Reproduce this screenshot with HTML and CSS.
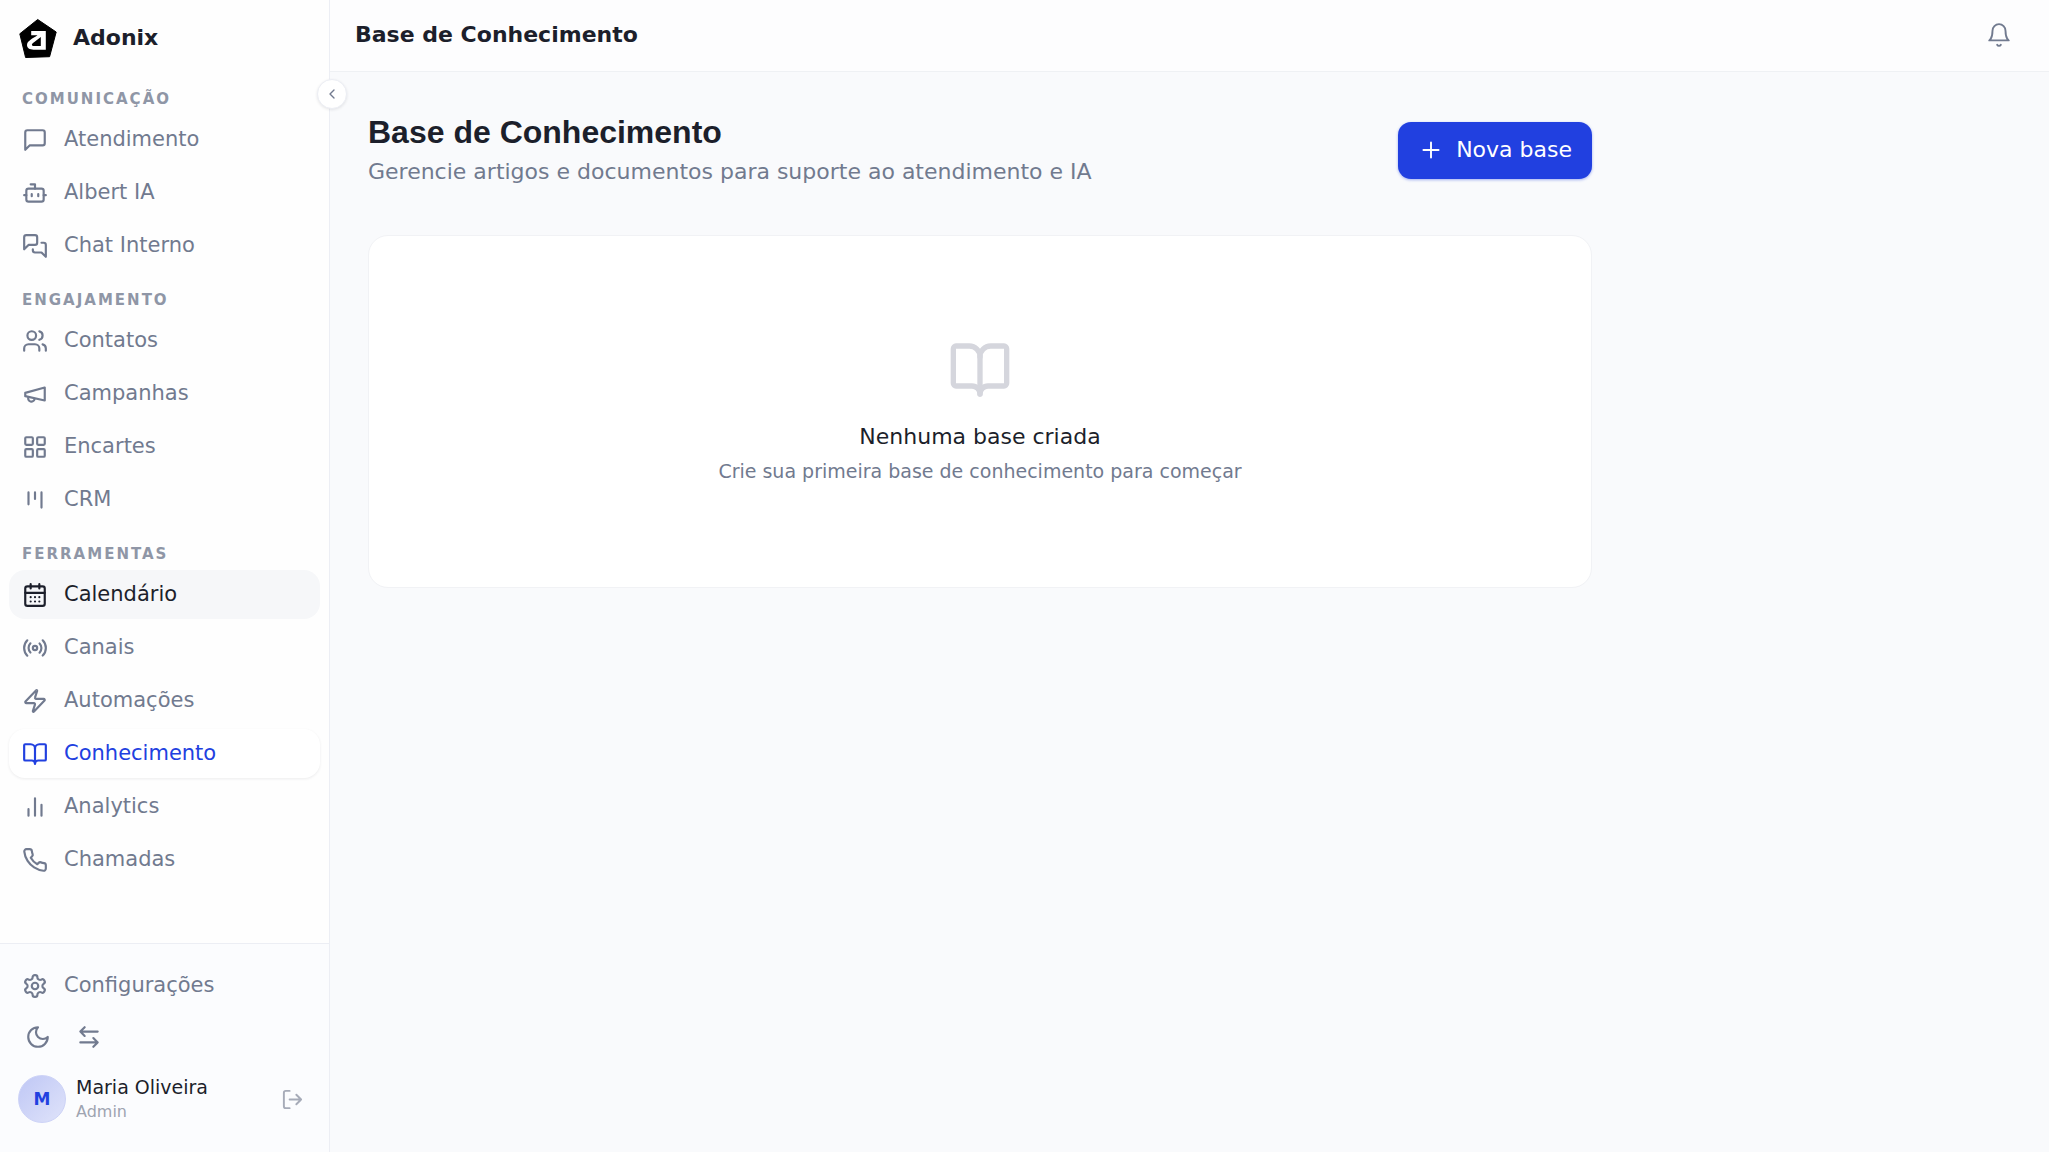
FILE: index.html
```html
<!DOCTYPE html>
<html lang="pt-BR">
<head>
    <meta charset="UTF-8">
    <title>Adonix</title>
    <link rel="stylesheet" href="styles.css">
</head>
<body>
    <aside class="sidebar">
        <div class="brand">
            <svg class="brand-logo" viewBox="0 0 38 40">
                <path fill="#000" stroke="#000" stroke-width="1" stroke-linejoin="round" d="M18.700 1.500 37.200 14 30.600 38.700 6.600 39.500.8 15.800z"/>
                <path fill="#fff" d="M12.200 13h14.600v18.700H14.500C10.500 31.700 8 29.800 8 27c0-4.200 6-6.500 10.500-9.700h-6.300z"/>
                <path fill="#000" d="M21.800 19v8.900h-6.500c-3.200 0-3-2-.6-3.500z"/>
            </svg>
            <span>Adonix</span>
        </div>
        <nav class="nav">
            <section class="nav-group">
                <h2>COMUNICAÇÃO</h2>
                <a href="#" class="nav-item">
                    <svg class="icon" viewBox="0 0 24 24"><path d="M21 15a2 2 0 0 1-2 2H7l-4 4V5a2 2 0 0 1 2-2h14a2 2 0 0 1 2 2z"/></svg>
                    <span>Atendimento</span>
                </a>
                <a href="#" class="nav-item">
                    <svg class="icon" viewBox="0 0 24 24"><path d="M12 8V4H8M2 14h2M20 14h2M15 13v2M9 13v2"/><rect x="4" y="8" width="16" height="12" rx="2"/></svg>
                    <span>Albert IA</span>
                </a>
                <a href="#" class="nav-item">
                    <svg class="icon" viewBox="0 0 24 24"><path d="M14 9a2 2 0 0 1-2 2H6l-4 4V4a2 2 0 0 1 2-2h8a2 2 0 0 1 2 2z"/><path d="M18 9h2a2 2 0 0 1 2 2v11l-4-4h-6a2 2 0 0 1-2-2v-1"/></svg>
                    <span>Chat Interno</span>
                </a>
            </section>
            <section class="nav-group">
                <h2>ENGAJAMENTO</h2>
                <a href="#" class="nav-item">
                    <svg class="icon" viewBox="0 0 24 24"><path d="M16 21v-2a4 4 0 0 0-4-4H6a4 4 0 0 0-4 4v2"/><circle cx="9" cy="7" r="4"/><path d="M22 21v-2a4 4 0 0 0-3-3.870M16 3.130a4 4 0 0 1 0 7.750"/></svg>
                    <span>Contatos</span>
                </a>
                <a href="#" class="nav-item">
                    <svg class="icon" viewBox="0 0 24 24"><path d="m3 11 18-5v12L3 14v-3z"/><path d="M11.600 16.800a3 3 0 1 1-5.800-1.600"/></svg>
                    <span>Campanhas</span>
                </a>
                <a href="#" class="nav-item">
                    <svg class="icon" viewBox="0 0 24 24"><rect x="3" y="3" width="7" height="7" rx="1"/><rect x="14" y="3" width="7" height="7" rx="1"/><rect x="14" y="14" width="7" height="7" rx="1"/><rect x="3" y="14" width="7" height="7" rx="1"/></svg>
                    <span>Encartes</span>
                </a>
                <a href="#" class="nav-item">
                    <svg class="icon" viewBox="0 0 24 24"><path d="M6 5v11M12 5v6M18 5v14"/></svg>
                    <span>CRM</span>
                </a>
            </section>
            <section class="nav-group">
                <h2>FERRAMENTAS</h2>
                <a href="#" class="nav-item hover">
                    <svg class="icon" viewBox="0 0 24 24"><rect x="3" y="4" width="18" height="18" rx="2"/><path d="M16 2v4M8 2v4M3 10h18M8 14h.01M12 14h.01M16 14h.01M8 18h.01M12 18h.01M16 18h.01"/></svg>
                    <span>Calendário</span>
                </a>
                <a href="#" class="nav-item">
                    <svg class="icon" viewBox="0 0 24 24"><path d="M4.900 19.100C1 15.200 1 8.800 4.900 4.900M7.800 16.200c-2.300-2.300-2.300-6.100 0-8.500M16.200 7.800c2.300 2.300 2.300 6.100 0 8.500M19.100 4.900C23 8.800 23 15.100 19.100 19"/><circle cx="12" cy="12" r="2"/></svg>
                    <span>Canais</span>
                </a>
                <a href="#" class="nav-item">
                    <svg class="icon" viewBox="0 0 24 24"><path d="M4 14a1 1 0 0 1-.78-1.630l9.900-10.200a.5.5 0 0 1 .86.460l-1.920 6.020A1 1 0 0 0 13 10h7a1 1 0 0 1 .78 1.630l-9.900 10.200a.5.5 0 0 1-.86-.46l1.920-6.020A1 1 0 0 0 11 14z"/></svg>
                    <span>Automações</span>
                </a>
                <a href="#" class="nav-item active" aria-current="page">
                    <svg class="icon" viewBox="0 0 24 24"><path d="M12 7v14"/><path d="M3 18a1 1 0 0 1-1-1V4a1 1 0 0 1 1-1h5a4 4 0 0 1 4 4 4 4 0 0 1 4-4h5a1 1 0 0 1 1 1v13a1 1 0 0 1-1 1h-6a3 3 0 0 0-3 3 3 3 0 0 0-3-3z"/></svg>
                    <span>Conhecimento</span>
                </a>
                <a href="#" class="nav-item">
                    <svg class="icon" viewBox="0 0 24 24"><path d="M18 20V10M12 20V4M6 20v-6"/></svg>
                    <span>Analytics</span>
                </a>
                <a href="#" class="nav-item">
                    <svg class="icon" viewBox="0 0 24 24"><path d="M22 16.920v3a2 2 0 0 1-2.180 2 19.790 19.790 0 0 1-8.630-3.070 19.500 19.500 0 0 1-6-6 19.790 19.790 0 0 1-3.070-8.670A2 2 0 0 1 4.110 2h3a2 2 0 0 1 2 1.720 12.840 12.840 0 0 0 .7 2.810 2 2 0 0 1-.45 2.110L8.090 9.910a16 16 0 0 0 6 6l1.270-1.270a2 2 0 0 1 2.110-.45 12.840 12.840 0 0 0 2.810.7A2 2 0 0 1 22 16.920z"/></svg>
                    <span>Chamadas</span>
                </a>
            </section>
        </nav>
        <div class="sidebar-footer">
            <a href="#" class="nav-item">
                <svg class="icon" viewBox="0 0 24 24"><path d="M12.220 2h-.44a2 2 0 0 0-2 2v.18a2 2 0 0 1-1 1.730l-.43.25a2 2 0 0 1-2 0l-.15-.08a2 2 0 0 0-2.730.73l-.22.38a2 2 0 0 0 .73 2.730l.15.1a2 2 0 0 1 1 1.720v.51a2 2 0 0 1-1 1.740l-.15.09a2 2 0 0 0-.73 2.730l.22.38a2 2 0 0 0 2.730.73l.15-.08a2 2 0 0 1 2 0l.43.25a2 2 0 0 1 1 1.730V20a2 2 0 0 0 2 2h.44a2 2 0 0 0 2-2v-.18a2 2 0 0 1 1-1.730l.43-.25a2 2 0 0 1 2 0l.15.08a2 2 0 0 0 2.730-.73l.22-.39a2 2 0 0 0-.73-2.730l-.15-.08a2 2 0 0 1-1-1.740v-.5a2 2 0 0 1 1-1.740l.15-.09a2 2 0 0 0 .73-2.730l-.22-.38a2 2 0 0 0-2.730-.73l-.15.08a2 2 0 0 1-2 0l-.43-.25a2 2 0 0 1-1-1.730V4a2 2 0 0 0-2-2z"/><circle cx="12" cy="12" r="3"/></svg>
                <span>Configurações</span>
            </a>
            <div class="tools">
                <button type="button" aria-label="Tema">
                    <svg class="icon" viewBox="0 0 24 24"><path d="M12 3a6 6 0 0 0 9 9 9 9 0 1 1-9-9Z"/></svg>
                </button>
                <button type="button" aria-label="Alternar">
                    <svg class="icon" viewBox="0 0 24 24"><path d="M8 3 4 7l4 4M4 7h16M16 21l4-4-4-4M20 17H4"/></svg>
                </button>
            </div>
            <div class="user">
                <div class="avatar">M</div>
                <div class="user-info">
                    <div class="user-name">Maria Oliveira</div>
                    <div class="user-role">Admin</div>
                </div>
                <button type="button" class="logout" aria-label="Sair">
                    <svg class="icon" viewBox="0 0 24 24"><path d="M9 21H5a2 2 0 0 1-2-2V5a2 2 0 0 1 2-2h4M16 17l5-5-5-5M21 12H9"/></svg>
                </button>
            </div>
        </div>
        <button type="button" class="collapse" aria-label="Recolher menu">
            <svg class="icon" viewBox="0 0 24 24"><path d="m15 18-6-6 6-6"/></svg>
        </button>
    </aside>
    <div class="page">
        <header class="topbar">
            <div class="topbar-title">Base de Conhecimento</div>
            <button type="button" aria-label="Notificações">
                <svg class="icon" viewBox="0 0 24 24"><path d="M6 8a6 6 0 0 1 12 0c0 7 3 9 3 9H3s3-2 3-9"/><path d="M10.300 21a1.940 1.940 0 0 0 3.400 0"/></svg>
            </button>
        </header>
        <main class="content">
            <div class="content-head">
                <div>
                    <h1>Base de Conhecimento</h1>
                    <p>Gerencie artigos e documentos para suporte ao atendimento e IA</p>
                </div>
                <button type="button" class="btn-primary">
                    <svg class="icon" viewBox="0 0 24 24"><path d="M5 12h14M12 5v14"/></svg>
                    <span>Nova base</span>
                </button>
            </div>
            <div class="empty">
                <svg class="icon" viewBox="0 0 24 24"><path d="M12 7v14"/><path d="M3 18a1 1 0 0 1-1-1V4a1 1 0 0 1 1-1h5a4 4 0 0 1 4 4 4 4 0 0 1 4-4h5a1 1 0 0 1 1 1v13a1 1 0 0 1-1 1h-6a3 3 0 0 0-3 3 3 3 0 0 0-3-3z"/></svg>
                <h3>Nenhuma base criada</h3>
                <p>Crie sua primeira base de conhecimento para começar</p>
            </div>
        </main>
    </div>
</body>
</html>
```
FILE: styles.css
```css
*{
    margin: 0;
    padding: 0;
    box-sizing: border-box;
}
body{
    display: flex;
    min-height: 100vh;
    background: #f9fafc;
    color: #1c1f2b;
    font-family: "DejaVu Sans", sans-serif;
    font-size: 22px;
}
button{
    border: 0;
    background: none;
    color: inherit;
    font: inherit;
    cursor: pointer;
}
.icon{
    display: block;
    flex: none;
    width: 26px;
    height: 26px;
    fill: none;
    stroke: currentColor;
    stroke-width: 2;
    stroke-linecap: round;
    stroke-linejoin: round;
}

/* sidebar */
.sidebar{
    position: relative;
    display: flex;
    flex-direction: column;
    flex: none;
    width: 330px;
    background: #fefefe;
    border-right: 1px solid #eceef4;
}
.brand{
    display: flex;
    align-items: center;
    gap: 16px;
    height: 76px;
    padding: 0 19px;
    font-weight: bold;
}
.brand span,
.nav-item span,
.btn-primary span{
    padding-bottom: 2px;
}
.brand-logo{
    width: 38px;
    height: 40px;
}
.nav{
    flex: 1;
    display: flex;
    flex-direction: column;
    gap: 19px;
    padding: 12px 9px;
}
.nav-group{
    display: flex;
    flex-direction: column;
    gap: 4px;
}
.nav-group h2{
    padding: 0 13px 1px;
    color: #8f96a6;
    font-size: 15px;
    line-height: 22px;
    letter-spacing: 2px;
}
.nav-item{
    display: flex;
    align-items: center;
    gap: 16px;
    height: 49px;
    padding: 0 13px;
    border-radius: 16px;
    color: #717a8f;
    font-size: 21px;
    line-height: 28px;
    text-decoration: none;
}
.nav-item.hover{
    background: #f6f7f9;
    color: #1c1f2b;
}
.nav-item.active{
    background: #fff;
    color: #2140e0;
    box-shadow: 0 1px 3px rgba(28, 31, 43, .08);
}
.sidebar-footer{
    padding: 17px 9px 28px;
    background: #fbfcfe;
    border-top: 1px solid #eceef4;
    color: #717a8f;
}
.tools{
    display: flex;
    gap: 4px;
    padding: 5px;
}
.tools button{
    display: grid;
    place-items: center;
    width: 47px;
    height: 44px;
}
.user{
    display: flex;
    align-items: center;
    gap: 10px;
    padding: 10px 9px 0;
}
.avatar{
    display: grid;
    place-items: center;
    width: 48px;
    height: 48px;
    border: 1px solid #cdd3f7;
    border-radius: 50%;
    background: linear-gradient(135deg, #bfc7f5, #dfe3fa);
    color: #2140e0;
    font-size: 17px;
    font-weight: bold;
}
.user-info{
    flex: 1;
}
.user-name{
    color: #1c1f2b;
    font-size: 19px;
    line-height: 26px;
}
.user-role{
    color: #9ea4b1;
    font-size: 16px;
    line-height: 24px;
}
.logout{
    padding: 7px;
    color: #a6abb8;
}
.logout .icon{
    width: 23px;
    height: 23px;
}
.collapse{
    position: absolute;
    top: 79px;
    right: -18px;
    display: grid;
    place-items: center;
    width: 30px;
    height: 30px;
    border: 1px solid #eceef4;
    border-radius: 50%;
    background: #fff;
    color: #717a8f;
    box-shadow: 0 1px 3px rgba(28, 31, 43, .1);
}
.collapse .icon{
    width: 16px;
    height: 16px;
}

/* page */
.page{
    flex: 1;
    min-width: 0;
}
.topbar{
    display: flex;
    align-items: center;
    justify-content: space-between;
    height: 72px;
    padding: 0 37px 2px 25px;
    background: #fdfdfe;
    border-bottom: 1px solid #eff1f4;
}
.topbar-title{
    font-weight: bold;
}
.topbar button{
    color: #717a8f;
}
.content{
    padding: 40px 38px;
}
.content-head{
    display: flex;
    align-items: center;
    justify-content: space-between;
    max-width: 1224px;
    margin-bottom: 47px;
}
.content-head h1{
    font-family: "Liberation Sans", sans-serif;
    font-size: 32px;
    line-height: 40px;
}
.content-head p{
    margin-top: 4px;
    color: #717a8f;
    line-height: 32px;
}
.btn-primary{
    display: flex;
    align-items: center;
    gap: 12px;
    height: 57px;
    padding: 0 20px;
    border-radius: 13px;
    background: #2140e0;
    color: #fff;
    box-shadow: 0 1px 3px rgba(33, 64, 224, .4);
}
.topbar .icon,
.btn-primary .icon{
    stroke-width: 1.75;
}
.empty{
    display: flex;
    flex-direction: column;
    align-items: center;
    max-width: 1224px;
    padding: 102px 20px;
    border: 1px solid #f1f2f5;
    border-radius: 20px;
    background: #fff;
    text-align: center;
}
.empty .icon{
    width: 64px;
    height: 64px;
    margin-bottom: 19px;
    color: #d5d6dd;
}
.empty h3{
    font-size: 22px;
    font-weight: normal;
    line-height: 32px;
}
.empty p{
    margin-top: 4px;
    color: #717a8f;
    font-size: 19px;
    line-height: 28px;
}
```
